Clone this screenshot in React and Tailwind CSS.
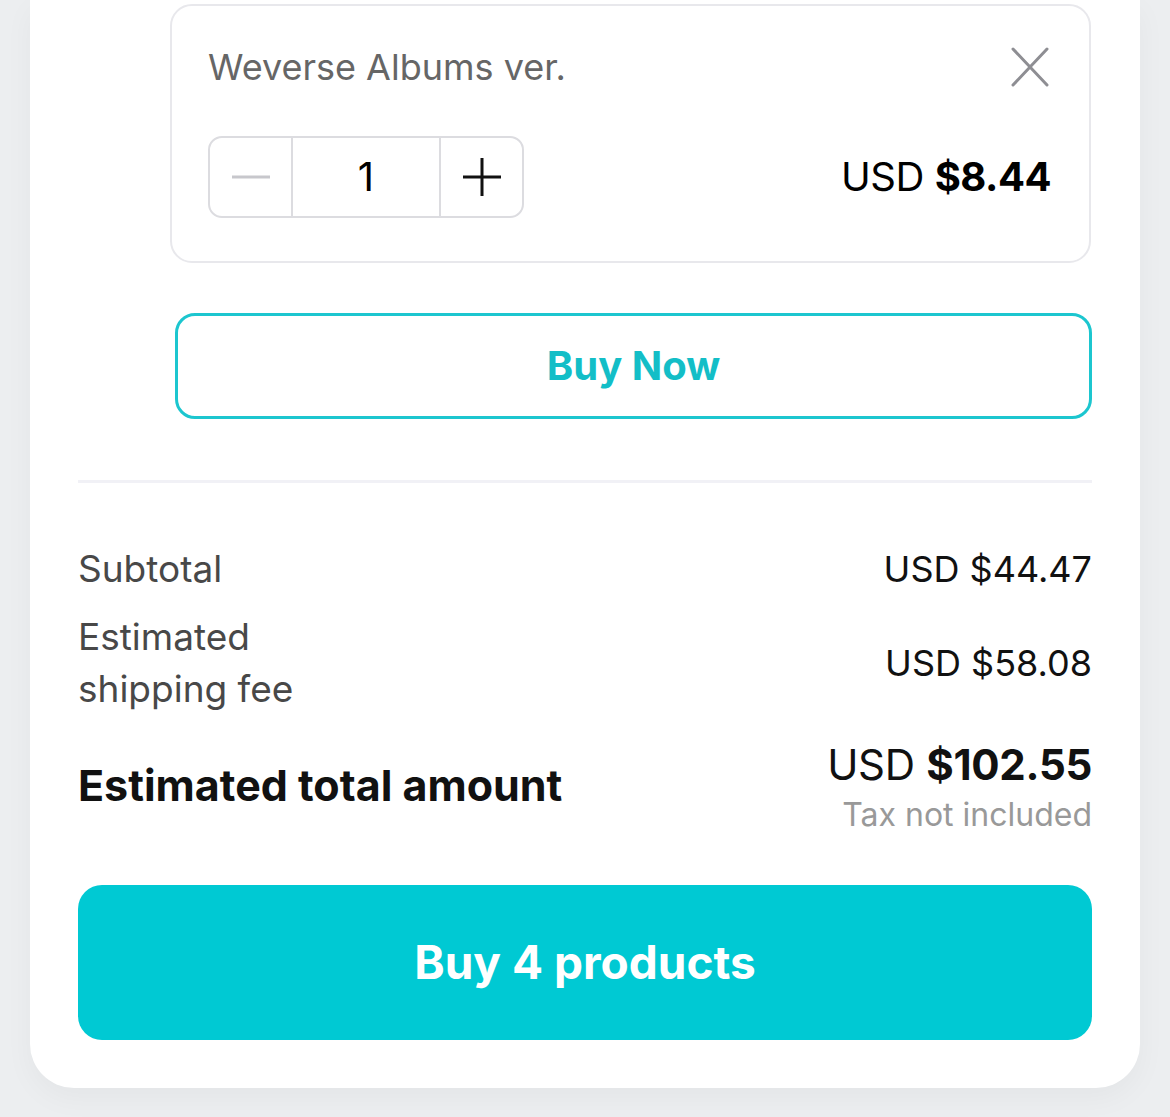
import React, { useState } from 'react';

const summary = [
  { id: 'sub', label: ['Subtotal'], value: '$44.47' },
  { id: 'ship', label: ['Estimated', 'shipping fee'], value: '$58.08' }
];

function App() {
  const [qty, setQty] = useState(1);

  return (
    <div className="min-h-screen bg-[#eceef0] font-['Inter',sans-serif]">
      <div className="mx-[30px] bg-white rounded-b-[44px] shadow-[0_10px_30px_rgba(0,0,0,0.04)] px-[48px] pt-[4px] pb-[48px]">
        {/* option card */}
        <div className="ml-[92px] mr-[1px] border-2 border-[#e8e8ec] rounded-[22px] pl-[36px] pr-[38px] pt-[39px] pb-[43px]">
          <div className="flex items-center justify-between">
            <span className="text-[36px] leading-[44px] text-[#666666]">Weverse Albums ver.</span>
            <button className="w-[38px] h-[40px] flex items-center justify-center mr-[2px]">
              <svg width="38" height="40" viewBox="0 0 38 40" fill="none">
                <line x1="2" y1="2" x2="36" y2="38" stroke="#8e8e93" strokeWidth="3" strokeLinecap="round" />
                <line x1="36" y1="2" x2="2" y2="38" stroke="#8e8e93" strokeWidth="3" strokeLinecap="round" />
              </svg>
            </button>
          </div>
          <div className="mt-[47px] flex items-center justify-between">
            <div className="flex h-[82px] border-2 border-[#dcdce0] rounded-[14px] overflow-hidden">
              <button
                onClick={() => setQty(Math.max(1, qty - 1))}
                className="w-[83px] flex items-center justify-center border-r-2 border-[#dcdce0]"
              >
                <svg width="38" height="4" viewBox="0 0 38 4">
                  <line x1="0" y1="2" x2="38" y2="2" stroke="#c7c7cc" strokeWidth="3" />
                </svg>
              </button>
              <div className="w-[146px] flex items-center justify-center text-[40px] text-black">{qty}</div>
              <button
                onClick={() => setQty(qty + 1)}
                className="w-[83px] flex items-center justify-center border-l-2 border-[#dcdce0]"
              >
                <svg width="38" height="38" viewBox="0 0 38 38">
                  <line x1="0" y1="19" x2="38" y2="19" stroke="#111" strokeWidth="3" />
                  <line x1="19" y1="0" x2="19" y2="38" stroke="#111" strokeWidth="3" />
                </svg>
              </button>
            </div>
            <div className="text-[40px] text-black tracking-[-0.5px]">
              USD <span className="font-bold">$8.44</span>
            </div>
          </div>
        </div>

        <button className="mt-[50px] ml-[97px] w-[calc(100%-97px)] h-[106px] border-[3px] border-[#1cc6cf] rounded-[20px] text-[40px] font-bold text-[#13bec7] flex items-center justify-center">
          Buy Now
        </button>

        <div className="mt-[61px] h-[3px] bg-[#f1f1f6]" />

        <div className="mt-[60px] flex flex-col gap-[16px]">
          {summary.map((row) => (
            <div key={row.id} className="flex items-center justify-between">
              <div className="text-[37px] leading-[52px] text-[#484848]">
                {row.label.map((l) => (
                  <div key={l}>{l}</div>
                ))}
              </div>
              <div className="text-[36px] leading-[52px] text-[#111111]">USD {row.value}</div>
            </div>
          ))}
        </div>

        <div className="mt-[24px] flex items-center justify-between">
          <div className="text-[43px] leading-[52px] font-bold text-[#111111] mb-[8px]">Estimated total amount</div>
          <div className="flex flex-col items-end">
            <div className="text-[42px] leading-[52px] text-[#111111] tracking-[-0.3px]">
              USD <span className="font-bold">$102.55</span>
            </div>
            <div className="text-[32px] leading-[48px] text-[#999999]">Tax not included</div>
          </div>
        </div>

        <button className="mt-[46px] w-full h-[155px] bg-[#00c9d3] rounded-[24px] text-[46px] font-bold text-white flex items-center justify-center">
          Buy 4 products
        </button>
      </div>
    </div>
  );
}

export default App;
